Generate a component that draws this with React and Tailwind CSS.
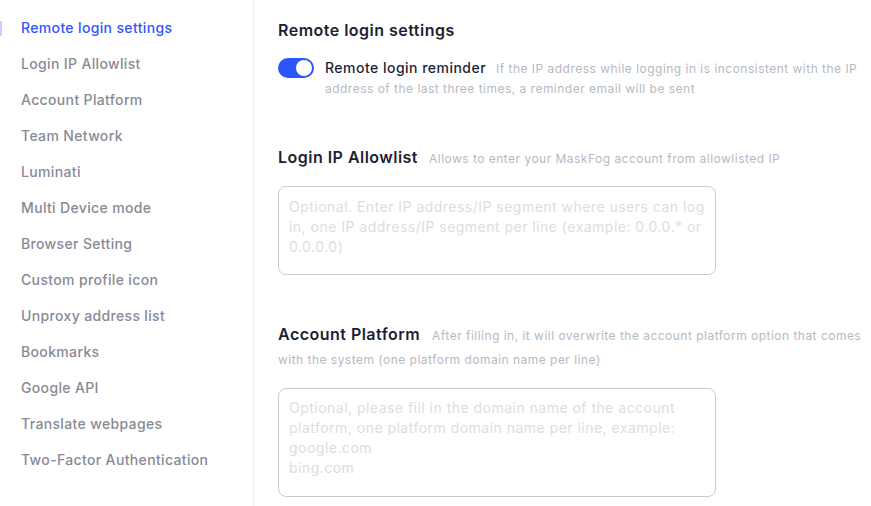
import { useState } from 'react';

const menu = [
  'Remote login settings',
  'Login IP Allowlist',
  'Account Platform',
  'Team Network',
  'Luminati',
  'Multi Device mode',
  'Browser Setting',
  'Custom profile icon',
  'Unproxy address list',
  'Bookmarks',
  'Google API',
  'Translate webpages',
  'Two-Factor Authentication',
];

const App = () => {
  const [active, setActive] = useState(0);
  const [reminder, setReminder] = useState(true);

  return (
    <div className="flex h-[506px] w-[871px] overflow-hidden bg-white font-['Inter',sans-serif] tracking-[0.03em]">
      {/* Sidebar */}
      <nav className="w-[254px] shrink-0 border-r border-[#ececf0] pt-[10px]">
        {menu.map((item, i) => (
          <button
            key={item}
            onClick={() => setActive(i)}
            className={`relative block w-full pl-[21px] text-left text-[14px] font-medium leading-[36px] tracking-[0.025em] ${
              active === i ? 'text-[#3355ff]' : 'text-[#878a96]'
            }`}
          >
            {active === i && (
              <span className="absolute left-0 top-[11px] h-[15px] w-[2px] bg-[#c7cfff]" />
            )}
            {item}
          </button>
        ))}
      </nav>

      {/* Content */}
      <main className="flex-1 pl-[24px] pt-[19px]">
        <h2 className="text-[16px] font-semibold leading-[22px] text-[#1c1f33]">Remote login settings</h2>

        <div className="mt-[17px] flex items-start pr-[10px]">
          <button
            onClick={() => setReminder(!reminder)}
            className={`flex h-[20px] w-[36px] shrink-0 items-center rounded-full px-[2px] ${
              reminder ? 'justify-end bg-[#2a55ff]' : 'justify-start bg-[#d3d5db]'
            }`}
          >
            <span className="h-[16px] w-[16px] rounded-full bg-white" />
          </button>
          <p className="ml-[11px] text-[12px] leading-[20px] text-[#b7b9c2]">
            <span className="mr-[10px] text-[14px] font-medium text-[#1c1f33]">Remote login reminder</span>
            If the IP address while logging in is inconsistent with the IP address of the last three times, a reminder email will be sent
          </p>
        </div>

        <div className="mt-[46px] flex items-baseline gap-[11px]">
          <h3 className="text-[16px] font-semibold text-[#1c1f33]">Login IP Allowlist</h3>
          <span className="text-[12px] text-[#b7b9c2]">Allows to enter your MaskFog account from allowlisted IP</span>
        </div>
        <textarea
          className="mt-[17px] block h-[89px] w-[438px] resize-none rounded-[8px] border border-[#c9cbd2] px-[10px] py-[10px] text-[14px] leading-[20px] text-[#1c1f33] outline-none placeholder:text-[#dcdde2]"
          placeholder="Optional. Enter IP address/IP segment where users can log in, one IP address/IP segment per line (example: 0.0.0.* or 0.0.0.0)"
        />

        <p className="mt-[47px] text-[12px] leading-[24px] text-[#b7b9c2]">
          <span className="mr-[12px] text-[16px] font-semibold text-[#1c1f33]">Account Platform</span>
          After filling in, it will overwrite the account platform option that comes with the system (one platform domain name per line)
        </p>
        <textarea
          className="mt-[16px] block h-[109px] w-[438px] resize-none rounded-[8px] border border-[#c9cbd2] px-[10px] py-[9px] text-[14px] leading-[20px] text-[#1c1f33] outline-none placeholder:text-[#dcdde2]"
          placeholder={'Optional, please fill in the domain name of the account platform, one platform domain name per line, example:\ngoogle.com\nbing.com'}
        />
      </main>
    </div>
  );
};

export default App;
